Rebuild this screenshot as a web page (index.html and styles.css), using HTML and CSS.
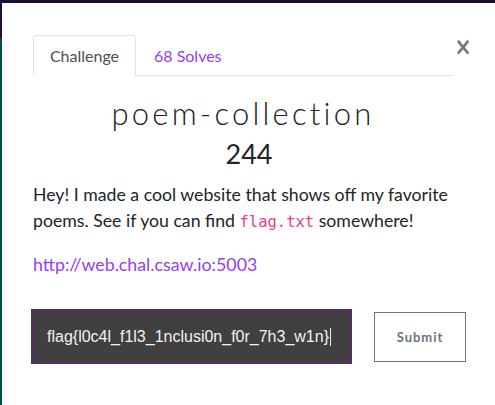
FILE: index.html
```html
<!DOCTYPE html>
<html>
<head>
<meta charset="utf-8">
<link rel="stylesheet" href="styles.css">
</head>
<body>
<div class="modal">
  <div class="header">
    <nav class="tabs">
      <span class="tab active">Challenge</span>
      <span class="tab link">68 Solves</span>
    </nav>
    <span class="close">&times;</span>
  </div>
  <div class="content">
    <h2 class="title">poem-collection</h2>
    <h3 class="value">244</h3>
    <p class="desc">Hey! I made a cool website that shows off my favorite poems. See if you can find <code>flag.txt</code> somewhere!</p>
    <a class="url">http://web.chal.csaw.io:5003</a>
  </div>
  <div class="form">
    <div class="input">flag{l0c4l_f1l3_1nclusi0n_f0r_7h3_w1n}<span class="caret"></span></div>
    <button class="submit">Submit</button>
  </div>
</div>
</body>
</html>
```
FILE: styles.css
```css
html, body { margin: 0; padding: 0; }
body {
  width: 495px;
  height: 405px;
  overflow: hidden;
  background: linear-gradient(to bottom, #1f1030 0, #1f1030 38px, #0d4a4a 38px);
  font-family: "Lato", sans-serif;
}
.modal {
  margin: 3px 0 0 2px;
  height: 402px;
  background: #fff;
  padding: 32px 0 0 31px;
  box-sizing: border-box;
}
.header {
  display: flex;
  align-items: flex-start;
  width: 440px;
}
.tabs {
  display: flex;
  width: 420px;
  height: 41px;
  border-bottom: 1px solid #dee2e6;
  box-sizing: border-box;
}
.tab {
  display: flex;
  align-items: center;
  font-size: 16px;
  height: 41px;
  box-sizing: border-box;
}
.tab.active {
  width: 103px;
  justify-content: center;
  color: #495057;
  border: 1px solid #dee2e6;
  border-bottom-color: #fff;
  border-radius: 4px 4px 0 0;
  background: #fff;
}
.tab.link { color: #9440ee; padding-left: 18px; }
.close {
  margin-left: 1px;
  margin-top: 1px;
  font-size: 24px;
  line-height: 22px;
  color: #777;
  font-family: "DejaVu Sans", sans-serif;
  font-weight: bold;
  transform: scaleX(0.85);
}
.content { width: 420px; }
.title {
  margin: 19px 0 0;
  text-align: center;
  font-family: "Lato", sans-serif;
  font-weight: 300;
  font-size: 31px;
  letter-spacing: 3.2px;
  line-height: 36px;
  color: #222;
}
.value {
  margin: 7px 0 0;
  padding-left: 12px;
  text-align: center;
  font-weight: 400;
  font-size: 27px;
  line-height: 32px;
  color: #212529;
}
.desc {
  margin: 12px -32px 0 0;
  font-size: 17.7px;
  line-height: 26px;
  color: #212529;
}
code {
  font-family: "DejaVu Sans Mono", monospace;
  font-size: 15.5px;
  line-height: 1;
  color: #e83e8c;
}
.url {
  display: block;
  margin-top: 20px;
  font-size: 17.8px;
  line-height: 20px;
  color: #9440ee;
}
.form {
  display: flex;
  align-items: center;
  margin: 35px 0 0 -2px;
}
.input {
  width: 321px;
  height: 55px;
  box-sizing: border-box;
  background: #404040;
  border: 2px solid #5a2a6a;
  color: #f2f2f2;
  font-family: "Liberation Sans", sans-serif;
  font-size: 16px;
  display: flex;
  align-items: center;
  padding-left: 14px;
}
.caret {
  display: inline-block;
  width: 1px;
  height: 18px;
  background: #eee;
  margin-left: 1px;
}
.submit {
  margin-left: 22px;
  width: 92px;
  height: 50px;
  background: #fff;
  border: 1px solid #6c757d;
  color: #6c757d;
  font-family: "Lato", sans-serif;
  font-weight: bold;
  font-size: 13px;
  letter-spacing: 1px;
}
```
